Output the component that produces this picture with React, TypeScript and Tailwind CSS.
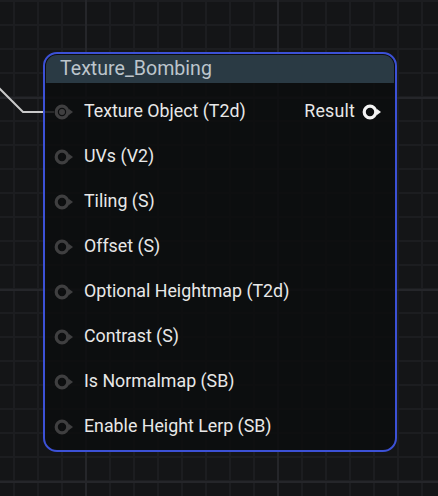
import React from 'react';

const inputs = [
  'Texture Object (T2d)',
  'UVs (V2)',
  'Tiling (S)',
  'Offset (S)',
  'Optional Heightmap (T2d)',
  'Contrast (S)',
  'Is Normalmap (SB)',
  'Enable Height Lerp (SB)',
];

function Pin({ connected = false, output = false }: { connected?: boolean; output?: boolean }) {
  const color = output ? '#f4f4f4' : '#3f3f40';
  return (
    <svg width="24" height="18" viewBox="0 0 24 18" className="block shrink-0">
      <circle cx="8" cy="9" r="5.8" fill="none" stroke={color} strokeWidth="3.2" />
      {connected && <circle cx="8" cy="9" r="3" fill={color} />}
      <path d="M15 6 L19 9 L15 12 Z" fill={color} />
    </svg>
  );
}

export default function App() {
  return (
    <div
      className="relative h-[496px] w-[438px] overflow-hidden bg-[#141517] pl-[43px] pt-[52px] [background-image:linear-gradient(to_right,#25262a_2px,transparent_2px),linear-gradient(to_bottom,#25262a_2px,transparent_2px),linear-gradient(to_right,#1c1d20_2px,transparent_2px),linear-gradient(to_bottom,#1c1d20_2px,transparent_2px)] [background-size:192px_192px,192px_192px,24px_24px,24px_24px] [background-position:85px_97px,85px_97px,13px_0px,13px_0px]"
      style={{ fontFamily: 'Roboto, "Noto Sans", sans-serif' }}
    >
      {/* incoming wire */}
      <svg className="absolute left-0 top-0" width="80" height="130">
        <path d="M-2 87 L23 112 L54 112" fill="none" stroke="#c9c9c9" strokeWidth="2" />
      </svg>

      <div className="relative w-[354px] rounded-[14px] border-2 border-[#3c51d6] bg-[#0c0d0e]/[0.86] p-px">
        <div className="flex h-[28px] items-center rounded-t-[11px] bg-[#2a3a44] pl-[14px] text-[19.6px] text-[#bcc5cc]">
          Texture_Bombing
        </div>
        <div className="mt-[6px]">
          {inputs.map((label, i) => (
            <div key={label} className="flex h-[45px] items-center pl-[8px] pr-[8px]">
              <Pin connected={i === 0} />
              <span className="ml-[6px] text-[17.8px] text-[#e8e8e8]">{label}</span>
              {i === 0 && (
                <div className="ml-auto flex items-center gap-[7px]">
                  <span className="text-[17.8px] tracking-[0.2px] text-[#e8e8e8]">Result</span>
                  <Pin output />
                </div>
              )}
            </div>
          ))}
        </div>
      </div>
    </div>
  );
}
